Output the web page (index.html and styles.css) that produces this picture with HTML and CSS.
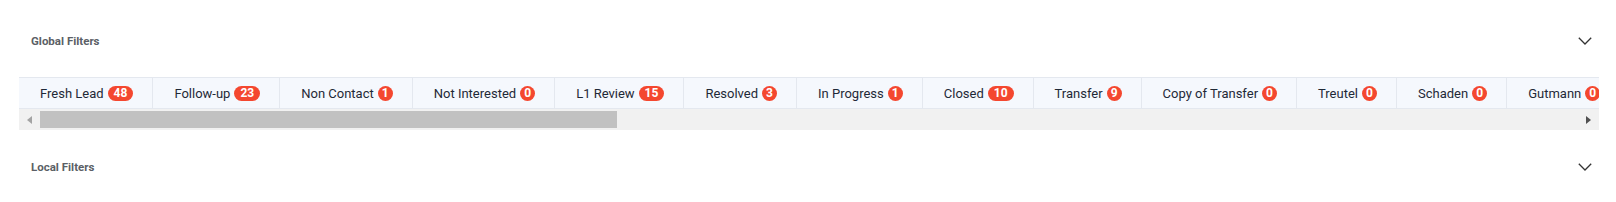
FILE: index.html
```html
<!DOCTYPE html>
<html>
<head>
<meta charset="utf-8">
<link rel="stylesheet" href="styles.css">
</head>
<body>
<div class="page">
  <div class="section-head head-global">
    <span class="section-title">Global Filters</span>
    <svg class="chev" width="14" height="8" viewBox="0 0 14 8"><polyline points="0.8,0.8 7,7 13.2,0.8" fill="none" stroke="#333" stroke-width="1.3"/></svg>
  </div>
  <div class="tabs-wrap">
    <div class="tabs">
      <div class="tab">Fresh Lead<span class="badge multi">48</span></div>
      <div class="tab">Follow-up<span class="badge multi">23</span></div>
      <div class="tab">Non Contact<span class="badge">1</span></div>
      <div class="tab">Not Interested<span class="badge">0</span></div>
      <div class="tab">L1 Review<span class="badge multi">15</span></div>
      <div class="tab">Resolved<span class="badge">3</span></div>
      <div class="tab">In Progress<span class="badge">1</span></div>
      <div class="tab">Closed<span class="badge multi">10</span></div>
      <div class="tab">Transfer<span class="badge">9</span></div>
      <div class="tab">Copy of Transfer<span class="badge">0</span></div>
      <div class="tab">Treutel<span class="badge">0</span></div>
      <div class="tab">Schaden<span class="badge">0</span></div>
      <div class="tab">Gutmann<span class="badge">0</span></div>
      <div class="tab">Kuhn<span class="badge">0</span></div>
    </div>
    <div class="scrollbar">
      <div class="sb-btn"><span class="arrow-left"></span></div>
      <div class="sb-thumb"></div>
      <div class="sb-rest"></div>
      <div class="sb-btn"><span class="arrow-right"></span></div>
    </div>
  </div>
  <div class="section-head head-local">
    <span class="section-title">Local Filters</span>
    <svg class="chev" width="14" height="8" viewBox="0 0 14 8"><polyline points="0.8,0.8 7,7 13.2,0.8" fill="none" stroke="#333" stroke-width="1.3"/></svg>
  </div>
</div>
</body>
</html>
```

FILE: styles.css
```css
html, body {
  margin: 0;
  padding: 0;
  background: #ffffff;
}
body {
  font-family: Roboto, "Liberation Sans", sans-serif;
}
.page {
  padding: 0 17px 0 19px;
}
.section-head {
  height: 38px;
  display: flex;
  align-items: center;
  justify-content: space-between;
  padding: 0 7px 0 12px;
}
.head-global {
  margin-top: 22px;
  margin-bottom: 17px;
}
.head-local {
  margin-top: 18px;
}
.section-title {
  font-size: 11.5px;
  font-weight: 700;
  color: #5b5f66;
}
.chev {
  display: block;
}
.tabs-wrap {
  width: 100%;
}
.tabs {
  display: flex;
  overflow: hidden;
  background: #f5f8fd;
  border-top: 1px solid #e4e8ef;
  border-bottom: 1px solid #e4e8ef;
  height: 30px;
}
.tab {
  flex: none;
  display: flex;
  align-items: center;
  padding: 0 19px 0 21px;
  border-right: 1px solid #e4e8ef;
  font-size: 13px;
  color: #1f2937;
  white-space: nowrap;
}
.badge {
  margin-left: 4px;
  height: 15px;
  min-width: 15px;
  border-radius: 8px;
  background: #f4472f;
  color: #ffffff;
  font-size: 12px;
  font-weight: 700;
  line-height: 15px;
  text-align: center;
  box-sizing: border-box;
}
.badge.multi {
  padding: 0 6px;
}
.scrollbar {
  display: flex;
  height: 21px;
  background: #f1f1f1;
}
.sb-btn {
  width: 21px;
  flex: none;
  display: flex;
  align-items: center;
  justify-content: center;
}
.arrow-left {
  width: 0;
  height: 0;
  border-top: 4px solid transparent;
  border-bottom: 4px solid transparent;
  border-right: 5px solid #a3a3a3;
}
.arrow-right {
  width: 0;
  height: 0;
  border-top: 4px solid transparent;
  border-bottom: 4px solid transparent;
  border-left: 5px solid #505050;
}
.sb-thumb {
  width: 577px;
  flex: none;
  margin: 2px 0 2px;
  background: #c1c1c1;
}
.sb-rest {
  flex: 1;
}
```
